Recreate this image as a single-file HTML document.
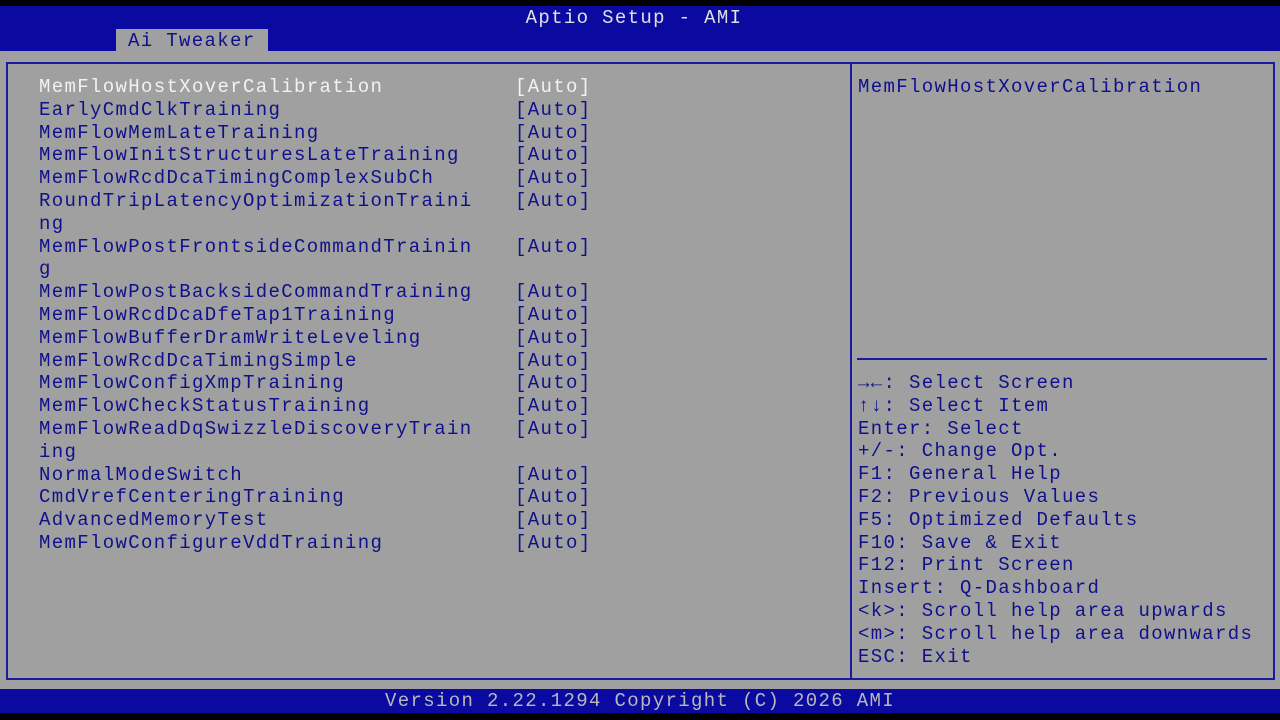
<!DOCTYPE html><html><head><style>
body{margin:0;width:1280px;height:720px;background:#000;position:relative;overflow:hidden;font-family:"Liberation Mono","DejaVu Sans Mono",monospace;font-size:19px;letter-spacing:1.35px}
.a{position:absolute}
.t{position:absolute;white-space:pre;line-height:22.8px;color:#10108c}
</style></head><body>
<div class="a" style="left:0;top:6px;width:1280px;height:45px;background:#0a0aa0"></div>
<div class="t" style="left:0;width:1268px;text-align:center;top:7px;color:#e0e0e0">Aptio Setup - AMI</div>
<div class="a" style="left:116px;top:29px;width:152px;height:22px;background:#a0a0a0"></div>
<div class="t" style="left:128px;top:30px">Ai Tweaker</div>
<div class="a" style="left:0;top:51px;width:1280px;height:638px;background:#a0a0a0"></div>
<div class="a" style="left:6px;top:62px;width:1265px;height:614px;border:2px solid #1a1aa0"></div>
<div class="a" style="left:850px;top:63px;width:2px;height:615px;background:#1a1aa0"></div>
<div class="a" style="left:857px;top:358px;width:410px;height:2px;background:#1a1aa0"></div>
<div class="t" style="left:39px;top:76px"><span style="color:#f2f2f2">MemFlowHostXoverCalibration</span>
EarlyCmdClkTraining
MemFlowMemLateTraining
MemFlowInitStructuresLateTraining
MemFlowRcdDcaTimingComplexSubCh
RoundTripLatencyOptimizationTraini
ng
MemFlowPostFrontsideCommandTrainin
g
MemFlowPostBacksideCommandTraining
MemFlowRcdDcaDfeTap1Training
MemFlowBufferDramWriteLeveling
MemFlowRcdDcaTimingSimple
MemFlowConfigXmpTraining
MemFlowCheckStatusTraining
MemFlowReadDqSwizzleDiscoveryTrain
ing
NormalModeSwitch
CmdVrefCenteringTraining
AdvancedMemoryTest
MemFlowConfigureVddTraining</div>
<div class="t" style="left:515px;top:76px"><span style="color:#f2f2f2">[Auto]</span>
[Auto]
[Auto]
[Auto]
[Auto]
[Auto]

[Auto]

[Auto]
[Auto]
[Auto]
[Auto]
[Auto]
[Auto]
[Auto]

[Auto]
[Auto]
[Auto]
[Auto]</div>
<div class="t" style="left:858px;top:76px">MemFlowHostXoverCalibration</div>
<div class="t" style="left:858px;top:372px"><b>→←</b>: Select Screen
<b>↑↓</b>: Select Item
Enter: Select
+/-: Change Opt.
F1: General Help
F2: Previous Values
F5: Optimized Defaults
F10: Save &amp; Exit
F12: Print Screen
Insert: Q-Dashboard
&lt;k&gt;: Scroll help area upwards
&lt;m&gt;: Scroll help area downwards
ESC: Exit</div>
<div class="a" style="left:0;top:689px;width:1280px;height:24px;background:#0a0aa0"></div>
<div class="t" style="left:0;width:1280px;text-align:center;top:690px;color:#b8b8b8">Version 2.22.1294 Copyright (C) 2026 AMI</div>
</body></html>
